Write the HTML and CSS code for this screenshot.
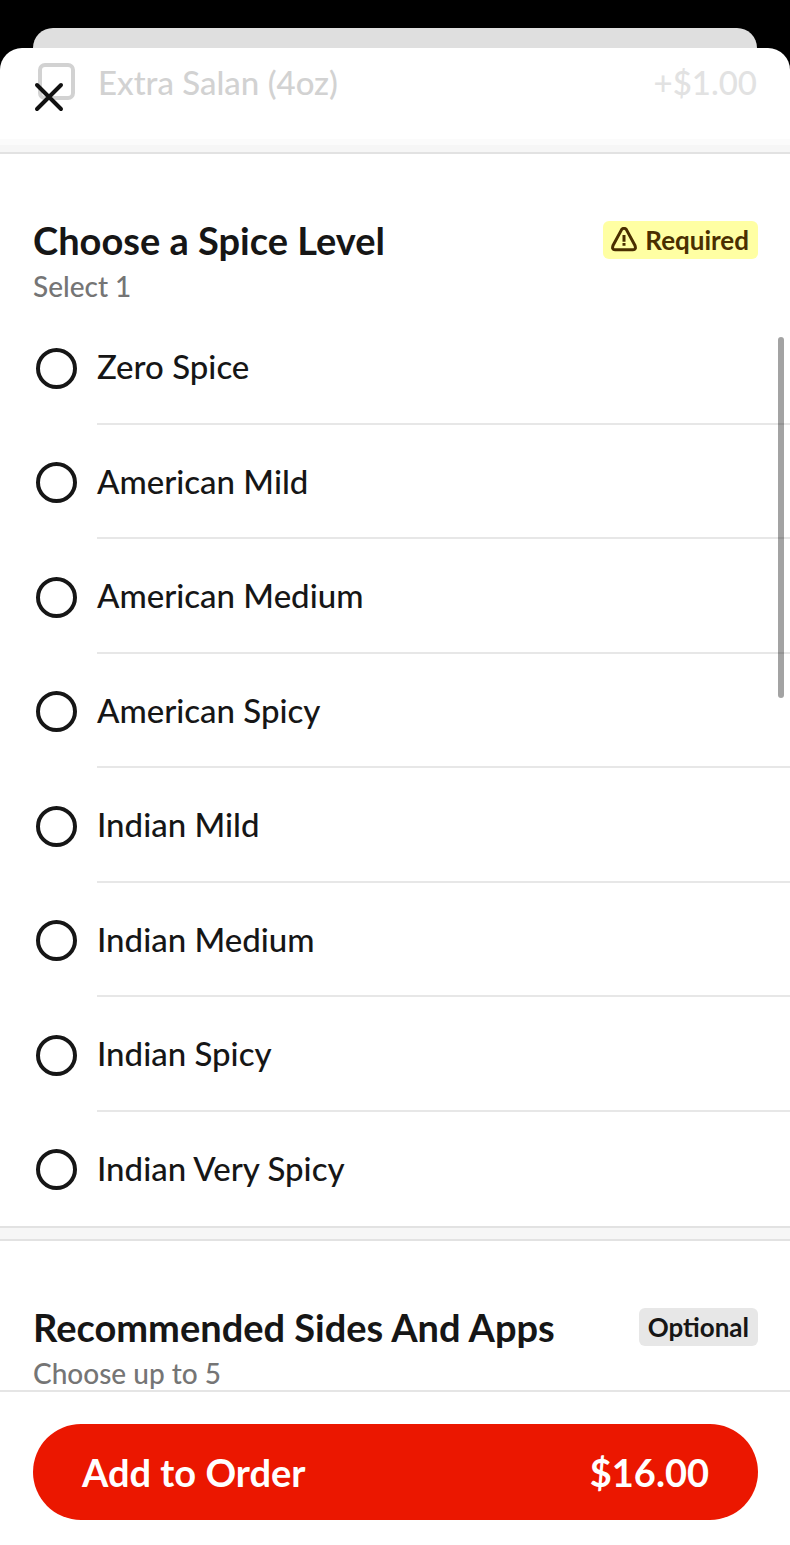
FILE: index.html
```html
<!DOCTYPE html>
<html lang="en">
<head>
  <meta charset="UTF-8" />
  <meta name="viewport" content="width=device-width, initial-scale=1" />
  <title>Add to Order</title>
  <link rel="stylesheet" href="styles.css">
</head>
<body>
  <div class="sheet-behind"></div>

  <form class="sheet">
    <button type="button" class="close" aria-label="Close">
      <svg width="32" height="32" viewBox="0 0 32 32" fill="none" stroke="#111" stroke-width="4" stroke-linecap="round">
        <path d="M4 4L28 28M28 4L4 28" />
      </svg>
    </button>

    <main class="content">
      <div class="extra">
        <input type="checkbox" id="salan" name="salan" />
        <label for="salan">Extra Salan (4oz)</label>
        <span class="extra-price">+$1.00</span>
      </div>

      <div class="divider divider-faded"></div>

      <section class="group">
        <div class="group-head">
          <h2>Choose a Spice Level</h2>
          <span class="badge badge-required">
            <svg width="26" height="26" viewBox="0 0 26 26" fill="none" stroke="#4a2f00" stroke-width="3" stroke-linecap="round" stroke-linejoin="round">
              <path d="M10.6 2.6Q13 0 15.4 2.6L24 18.5Q25.4 22.8 22 22.8H4Q0.6 22.8 2 18.5Z" />
              <path d="M13 8V14.8M13 16V18.8" stroke-width="3" stroke-linecap="butt" />
            </svg>
            Required
          </span>
        </div>
        <p class="hint">Select 1</p>
      </section>

      <ul class="options">
        <li><input type="radio" name="spice" id="s1" /><label for="s1">Zero Spice</label></li>
        <li><input type="radio" name="spice" id="s2" /><label for="s2">American Mild</label></li>
        <li><input type="radio" name="spice" id="s3" /><label for="s3">American Medium</label></li>
        <li><input type="radio" name="spice" id="s4" /><label for="s4">American Spicy</label></li>
        <li><input type="radio" name="spice" id="s5" /><label for="s5">Indian Mild</label></li>
        <li><input type="radio" name="spice" id="s6" /><label for="s6">Indian Medium</label></li>
        <li><input type="radio" name="spice" id="s7" /><label for="s7">Indian Spicy</label></li>
        <li><input type="radio" name="spice" id="s8" /><label for="s8">Indian Very Spicy</label></li>
      </ul>

      <div class="divider"></div>

      <section class="group">
        <div class="group-head">
          <h2>Recommended Sides And Apps</h2>
          <span class="badge">Optional</span>
        </div>
        <p class="hint">Choose up to 5</p>
      </section>

      <div class="scrollbar"></div>
    </main>

    <footer class="footer">
      <button type="submit" class="add">
        <span>Add to Order</span>
        <span>$16.00</span>
      </button>
    </footer>
  </form>
</body>
</html>
```

FILE: styles.css
```css
* {
  box-sizing: border-box;
}
body {
  margin: 0;
  height: 100vh;
  display: flex;
  flex-direction: column;
  background: #000;
  color: #161616;
  font-family: Lato, "Open Sans", sans-serif;
  font-size: 33px;
  line-height: 40px;
  font-weight: 500;
  overflow: hidden;
}
.sheet-behind {
  flex: none;
  height: 20px;
  margin: 28px 33px 0;
  background: #dfdfdf;
  border-radius: 20px 20px 0 0;
}
.sheet {
  position: relative;
  flex: 1;
  min-height: 0;
  display: flex;
  flex-direction: column;
  background: #fff;
  border-radius: 22px 22px 0 0;
  overflow: hidden;
}
.close {
  position: absolute;
  top: 33px;
  left: 33px;
  z-index: 1;
  width: 32px;
  height: 32px;
  padding: 0;
  border: none;
  background: none;
  cursor: pointer;
}
.close svg {
  display: block;
}
.content {
  position: relative;
  flex: 1;
  min-height: 0;
  overflow: hidden;
}

/* row scrolled under the header */
.extra {
  display: flex;
  align-items: center;
  height: 91px;
  padding: 0 33px 24px 38px;
  color: #d2d2d2;
}
.extra input {
  appearance: none;
  width: 37px;
  height: 37px;
  margin: 0 23px 0 0;
  border: 4px solid #d2d2d2;
  border-radius: 7px;
}
.extra-price {
  margin-left: auto;
  color: #e2e2e2;
}

.divider {
  height: 15px;
  background: #f6f6f6;
  border: solid #e2e2e2;
  border-width: 2px 0;
}
.divider-faded {
  border-top: 6px solid #fbfbfb;
}

.group {
  padding: 64px 32px 0 33px;
}
.group-head {
  display: flex;
  align-items: center;
  justify-content: space-between;
}
h2 {
  margin: 0;
  font-size: 38px;
  line-height: 44px;
  font-weight: 700;
}
.hint {
  margin: 4px 0 0;
  font-size: 28px;
  line-height: 40px;
  color: #757575;
}
.badge {
  display: flex;
  align-items: center;
  gap: 8px;
  height: 38px;
  padding: 0 9px;
  border-radius: 6px;
  background: #e7e7e7;
  font-size: 26px;
  font-weight: 700;
}
.badge-required {
  padding: 0 9px 0 8px;
  background: #ffffa3;
  color: #4a2f00;
}

.options {
  display: grid;
  grid-auto-rows: 1fr;
  min-height: 916px;
  margin: 4px 0 0;
  padding: 0;
  list-style: none;
}
.options li {
  display: flex;
  align-items: center;
  padding-left: 36px;
}
.options input {
  appearance: none;
  flex: none;
  width: 41px;
  height: 41px;
  margin: 2px 20px 0 0;
  border: 4px solid #161616;
  border-radius: 50%;
}
.options input:checked {
  border-width: 12px;
}
.options label {
  flex: 1;
  display: flex;
  align-items: center;
  height: 100%;
  border-bottom: 2px solid #e7e7e7;
}
.options li:last-child label {
  border-color: transparent;
}

.scrollbar {
  position: absolute;
  top: 289px;
  right: 6px;
  width: 6px;
  height: 361px;
  border-radius: 3px;
  background: rgba(0, 0, 0, 0.36);
}

.footer {
  flex: none;
  padding: 32px 32px 25px 33px;
  border-top: 2px solid #e5e5e5;
}
.add {
  display: flex;
  align-items: center;
  justify-content: space-between;
  width: 100%;
  height: 96px;
  padding: 0 49px;
  border: none;
  border-radius: 48px;
  background: #eb1700;
  color: #fff;
  font-family: inherit;
  font-size: 38px;
  font-weight: 700;
  cursor: pointer;
}
```
